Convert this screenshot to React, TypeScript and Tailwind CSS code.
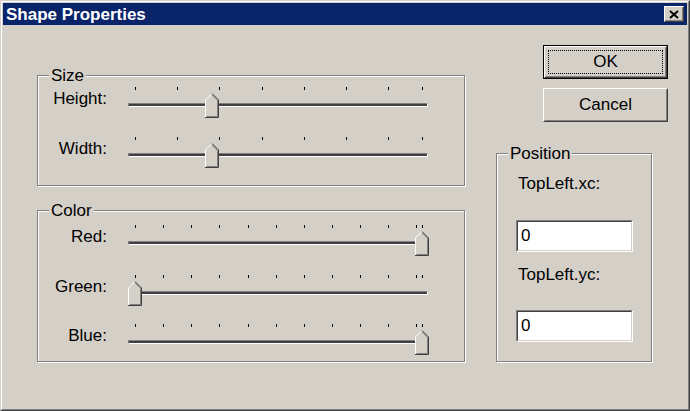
const FACE = 'bg-[#d4d0c8]';

type SliderProps = {
  thumb: number;
  step: number;
};

function Slider({ thumb, step }: SliderProps) {
  const ticks: number[] = [];
  for (let x = 7; x < 294 - 2; x += step) ticks.push(Math.round(x));
  ticks.push(294);

  return (
    <div className="relative h-[31px] w-[300px]">
      <svg width="300" height="3" className="block">
        {ticks.map((x) => (
          <rect key={x} x={x} y={0} width={1} height={3} fill="#000" />
        ))}
      </svg>
      <div className="mt-[13px] h-[4px] border border-t-[#808080] border-l-[#808080] border-r-white border-b-white bg-[#404040]" />
      <svg
        width="14"
        height="25"
        className="absolute top-[6px]"
        style={{ left: thumb }}
      >
        <polygon points="0.5,24.5 0.5,7 7,0.5 13.5,7 13.5,24.5" fill="#d4d0c8" />
        <polyline points="0.5,24 0.5,7 7,0.5" fill="none" stroke="#fff" />
        <polyline points="7,1.8 12.5,7.3 12.5,23.5 1.5,23.5" fill="none" stroke="#808080" />
        <polyline points="7,0.5 13.5,7 13.5,24.5 0,24.5" fill="none" stroke="#404040" />
      </svg>
    </div>
  );
}

function SliderRow({ label, thumb, step, className = '' }: SliderProps & { label: string; className?: string }) {
  return (
    <div className={`flex ${className}`}>
      <div className="w-[69px] pt-[2px] text-right leading-[20px]">{label}</div>
      <div className="ml-[21px]">
        <Slider thumb={thumb} step={step} />
      </div>
    </div>
  );
}

function GroupBox({
  title,
  className,
  children,
}: {
  title: string;
  className: string;
  children: React.ReactNode;
}) {
  return (
    <div
      className={`relative border border-[#808080] shadow-[1px_1px_0_#fff,inset_1px_1px_0_#fff] ${className}`}
    >
      <span className={`absolute -top-[10px] left-[11px] px-[2px] leading-[20px] ${FACE}`}>
        {title}
      </span>
      {children}
    </div>
  );
}

function Field() {
  return (
    <div className="h-[32px] w-[117px] border border-t-[#808080] border-l-[#808080] border-r-white border-b-white">
      <div className="h-full border border-t-[#404040] border-l-[#404040] border-r-[#d4d0c8] border-b-[#d4d0c8] bg-white">
        <input
          readOnly
          defaultValue="0"
          className="h-full w-full bg-white px-[3px] text-[17px] outline-none"
        />
      </div>
    </div>
  );
}

export default function App() {
  return (
    <div
      className={`h-[411px] w-[690px] border border-t-[#d4d0c8] border-l-[#d4d0c8] border-r-[#404040] border-b-[#404040] ${FACE} font-['Liberation_Sans',Arial,sans-serif] text-[17px] text-black`}
    >
      <div className="flex h-full flex-col border border-t-white border-l-white border-r-[#808080] border-b-[#808080] p-px">
        {/* title bar */}
        <div className="flex h-[22px] shrink-0 items-center bg-[#0a246a] pl-[3px] pr-[3px]">
          <span className="pt-px font-bold leading-[20px] text-white">Shape Properties</span>
          <div className="ml-auto h-[16px] w-[20px] border border-t-white border-l-white border-r-[#404040] border-b-[#404040] bg-[#d4d0c8]">
            <div className="flex h-full items-center justify-center border border-transparent border-r-[#808080] border-b-[#808080]">
              <svg width="10" height="9" viewBox="0 0 10 9">
                <path d="M1 1 L9 8 M9 1 L1 8" stroke="#000" strokeWidth="2" />
              </svg>
            </div>
          </div>
        </div>

        {/* body */}
        <div className="flex flex-1">
          <div className="ml-[34px] mt-[50px] flex flex-col gap-[24px]">
            <GroupBox title="Size" className="h-[111px] w-[428px] pt-[11px]">
              <SliderRow label="Height:" thumb={77} step={42.2} />
              <SliderRow label="Width:" thumb={77} step={42.2} className="mt-[19px]" />
            </GroupBox>
            <GroupBox title="Color" className="h-[152px] w-[428px] pt-[14px]">
              <SliderRow label="Red:" thumb={287} step={28.14} />
              <SliderRow label="Green:" thumb={0} step={28.14} className="mt-[19px]" />
              <SliderRow label="Blue:" thumb={287} step={28.14} className="mt-[18px]" />
            </GroupBox>
          </div>

          <div className="ml-[31px] flex flex-col">
            <div className="ml-[47px] mt-[20px] flex flex-col gap-[9px]">
              <button className="h-[34px] w-[125px] border border-black bg-[#d4d0c8] p-0">
                <div className="h-full border border-t-white border-l-white border-r-[#404040] border-b-[#404040]">
                  <div className="h-full border border-transparent border-r-[#808080] border-b-[#808080] p-[2px]">
                    <div className="flex h-full items-center justify-center border border-dotted border-black leading-[20px]">
                      OK
                    </div>
                  </div>
                </div>
              </button>
              <button className="h-[34px] w-[125px] border border-t-white border-l-white border-r-[#404040] border-b-[#404040] bg-[#d4d0c8] p-0">
                <div className="flex h-full items-center justify-center border border-transparent border-r-[#808080] border-b-[#808080] leading-[20px]">
                  Cancel
                </div>
              </button>
            </div>

            <GroupBox title="Position" className="mt-[31px] h-[209px] w-[156px] pl-[19px] pt-[20px]">
              <div className="ml-[2px] leading-[20px]">TopLeft.xc:</div>
              <div className="mt-[26px]">
                <Field />
              </div>
              <div className="ml-[2px] mt-[13px] leading-[20px]">TopLeft.yc:</div>
              <div className="mt-[25px]">
                <Field />
              </div>
            </GroupBox>
          </div>
        </div>
      </div>
    </div>
  );
}
